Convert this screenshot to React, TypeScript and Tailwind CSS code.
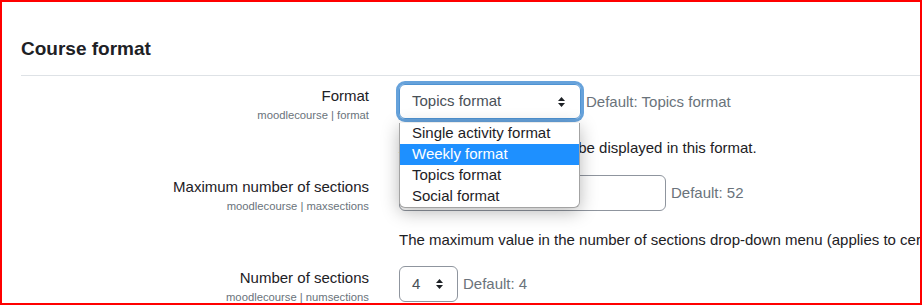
const FONT = "font-['Liberation_Sans',Arial,sans-serif]";

const Arrows = () => (
  <svg width="7" height="10" viewBox="0 0 7 10" aria-hidden className="shrink-0">
    <path d="M0 4 3.5 0 7 4Z M0 6 7 6 3.5 10Z" fill="#1d2125" />
  </svg>
);

const Label = ({ title, name }: { title: string; name: string }) => (
  <div className="w-[348px] shrink-0 pt-px text-right">
    <div className="text-[15px] leading-[22px] text-[#1d2125]">{title}</div>
    <div className="text-[11.25px] leading-[16px] text-[#6a737b]">{name}</div>
  </div>
);

const Default = ({ children }: { children: React.ReactNode }) => (
  <span className="ml-[5px] whitespace-nowrap text-[15px] leading-[22px] text-[#6a737b]">{children}</span>
);

const options = ["Single activity format", "Weekly format", "Topics format", "Social format"];

export default function App() {
  return (
    <div className={`relative h-[305px] w-[922px] overflow-hidden border-2 border-[#ff0000] bg-white ${FONT}`}>
      {/* Kopf */}
      <h3 className="pl-[19px] pt-[35px] text-[19px] font-bold leading-[23px] text-[#1d2125]">Course format</h3>
      <div className="ml-[19px] mt-[15px] border-t border-[#dee2e6]" />

      {/* Format */}
      <div className="mt-[8px] flex pl-[19px]">
        <Label title="Format" name="moodlecourse | format" />
        <div className="ml-[30px] min-w-0">
          <div className="flex items-center">
            <div className="flex h-[35px] w-[182px] items-center justify-between rounded-md border border-[#4f93d2] pl-[12px] pr-[15px] text-[15px] text-[#495057] shadow-[0_0_0_3px_#66a2db]">
              Topics format
              <Arrows />
            </div>
            <Default>Default: Topics format</Default>
          </div>
          <p className="mt-[18px] whitespace-nowrap text-[15px] leading-[22px] text-[#1d2125]">
            All the course sections will be displayed in this format.
          </p>
        </div>
      </div>

      {/* Maximale Abschnitte */}
      <div className="mt-[16px] flex pl-[19px]">
        <Label title="Maximum number of sections" name="moodlecourse | maxsections" />
        <div className="ml-[30px] min-w-0">
          <div className="flex items-center">
            <div className="h-[36px] w-[267px] rounded-md border border-[#8f959e]" />
            <Default>Default: 52</Default>
          </div>
          <p className="mt-[18px] whitespace-nowrap text-[15px] leading-[22px] text-[#1d2125]">
            The maximum value in the number of sections drop-down menu (applies to certain formats only, such as weeks and topics).
          </p>
        </div>
      </div>

      {/* Anzahl Abschnitte */}
      <div className="mt-[15px] flex pl-[19px]">
        <Label title="Number of sections" name="moodlecourse | numsections" />
        <div className="ml-[30px] flex items-start">
          <div className="flex h-[36px] w-[59px] items-center justify-between rounded-md border border-[#8f959e] pl-[12px] pr-[14px] text-[15px] text-[#495057]">
            4
            <Arrows />
          </div>
          <span className="mt-[6px]"><Default>Default: 4</Default></span>
        </div>
      </div>

      {/* Aufgeklappte Liste */}
      <ul className="absolute left-[397px] top-[121px] w-[181px] overflow-hidden rounded-b-md border border-t-0 border-[#a3a3a3] bg-white shadow-[0_4px_18px_rgba(0,0,0,0.28)]">
        {options.map((o) => (
          <li
            key={o}
            className={`flex h-[21px] items-center px-[12px] text-[15px] ${o === "Weekly format" ? "bg-[#1e90ff] text-white" : "text-[#1d2125]"}`}
          >
            {o}
          </li>
        ))}
      </ul>
    </div>
  );
}
